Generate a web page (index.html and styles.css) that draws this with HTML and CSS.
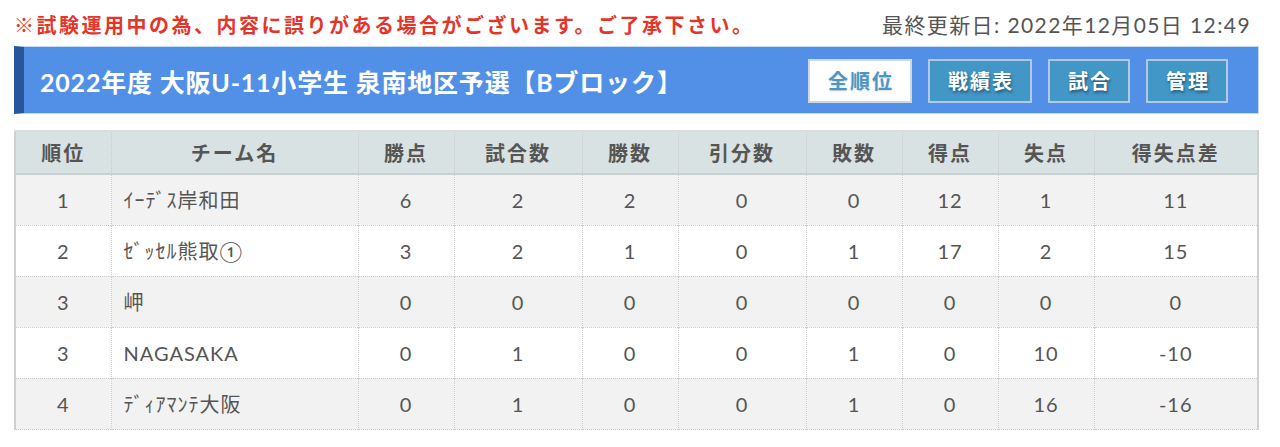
FILE: index.html
```html
<!DOCTYPE html>
<html lang="ja">
<head>
<meta charset="utf-8">
<title>2022年度 大阪U-11小学生 泉南地区予選【Bブロック】</title>
<link rel="stylesheet" href="styles.css">
</head>
<body>
<div class="page">
  <div class="notice-row">
    <p class="notice">※試験運用中の為、内容に誤りがある場合がございます。ご了承下さい。</p>
    <p class="updated">最終更新日: 2022年12月05日 12:49</p>
  </div>
  <div class="titlebar">
    <h1 class="title">2022年度 大阪U-11小学生 泉南地区予選【Bブロック】</h1>
    <nav class="nav">
      <a class="btn btn-active">全順位</a>
      <a class="btn">戦績表</a>
      <a class="btn">試合</a>
      <a class="btn">管理</a>
    </nav>
  </div>
  <table class="standings">
    <colgroup>
      <col class="c-rank"><col class="c-team"><col class="c-2"><col class="c-3"><col class="c-2"><col class="c-3"><col class="c-2"><col class="c-2"><col class="c-2"><col class="c-4">
    </colgroup>
    <thead>
      <tr><th>順位</th><th>チーム名</th><th>勝点</th><th>試合数</th><th>勝数</th><th>引分数</th><th>敗数</th><th>得点</th><th>失点</th><th>得失点差</th></tr>
    </thead>
    <tbody>
      <tr><td>1</td><td class="team">ｲｰﾃﾞｽ岸和田</td><td>6</td><td>2</td><td>2</td><td>0</td><td>0</td><td>12</td><td>1</td><td>11</td></tr>
      <tr><td>2</td><td class="team">ｾﾞｯｾﾙ熊取①</td><td>3</td><td>2</td><td>1</td><td>0</td><td>1</td><td>17</td><td>2</td><td>15</td></tr>
      <tr><td>3</td><td class="team">岬</td><td>0</td><td>0</td><td>0</td><td>0</td><td>0</td><td>0</td><td>0</td><td>0</td></tr>
      <tr><td>3</td><td class="team">NAGASAKA</td><td>0</td><td>1</td><td>0</td><td>0</td><td>1</td><td>0</td><td>10</td><td>-10</td></tr>
      <tr><td>4</td><td class="team">ﾃﾞｨｱﾏﾝﾃ大阪</td><td>0</td><td>1</td><td>0</td><td>0</td><td>1</td><td>0</td><td>16</td><td>-16</td></tr>
    </tbody>
  </table>
</div>
</body>
</html>
```

FILE: styles.css
```css
* { box-sizing: border-box; }
html, body { margin: 0; padding: 0; background: #fff; }
body {
  font-family: Lato, "Noto Sans CJK JP", sans-serif;
  color: #555;
}
.page {
  padding: 0 21px 0 14px;
}
.notice-row {
  height: 46px;
  display: flex;
  justify-content: space-between;
  align-items: center;
  padding-top: 2px;
}
.notice {
  margin: 0;
  color: #e5352a;
  font-weight: 700;
  font-size: 20px;
  letter-spacing: 2.5px;
}
.updated {
  margin: 0;
  color: #555;
  font-size: 21px;
  letter-spacing: 1.4px;
  padding-right: 8px;
}
.titlebar {
  height: 68px;
  display: flex;
  align-items: center;
  justify-content: space-between;
  background: #5190e6;
  border: 1px solid #c4d9f4;
  border-left: 10px solid #27579a;
  padding: 1px 30px 0 16px;
  margin-bottom: 16px;
}
.title {
  margin: 0;
  color: #fff;
  font-size: 25px;
  font-weight: 700;
  letter-spacing: 0.8px;
}
.nav {
  display: flex;
  gap: 16px;
}
.btn {
  display: flex;
  align-items: center;
  justify-content: center;
  height: 44px;
  padding: 0 16px 0 18px;
  background: #4297c7;
  border: 2px solid #b2c9e6;
  color: #fff;
  font-size: 20px;
  font-weight: 700;
  letter-spacing: 2px;
  text-shadow: 1px 2px 3px rgba(0, 0, 0, 0.45);
}
.btn-active {
  background: #fff;
  border-color: #cfd8e2;
  color: #4a97c6;
  text-shadow: 0 1px 2px rgba(0, 0, 0, 0.15);
}
.standings {
  width: 100%;
  border-collapse: collapse;
  table-layout: fixed;
  border-left: 2px solid #d0d0d0;
  border-right: 2px solid #d0d0d0;
  border-top: 2px solid #d8dcdc;
  border-bottom: 1px dotted #c8c8c8;
}
.c-rank { width: 96px; }
.c-team { width: 247px; }
.c-2 { width: 96px; }
.c-3 { width: 128px; }
.c-4 { width: 164px; }
.standings th {
  height: 43px;
  background: #d9e2e3;
  color: #555;
  font-size: 20px;
  font-weight: 700;
  letter-spacing: 2px;
  text-align: center;
  border-left: 1px dotted #c5cccd;
  border-bottom: 2px solid #c8d0d1;
  padding: 0;
}
.standings td {
  height: 51px;
  font-size: 20px;
  letter-spacing: 1px;
  text-align: center;
  border-left: 1px dotted #cccccc;
  border-top: 1px dotted #cccccc;
  padding: 0;
  color: #555;
}
.standings th:first-child, .standings td:first-child { border-left: none; }
.standings tbody tr:nth-child(odd) td { background: #f2f2f2; }
.standings tbody tr:nth-child(even) td { background: #fff; }
.standings td.team {
  text-align: left;
  padding-left: 12px;
}
```
